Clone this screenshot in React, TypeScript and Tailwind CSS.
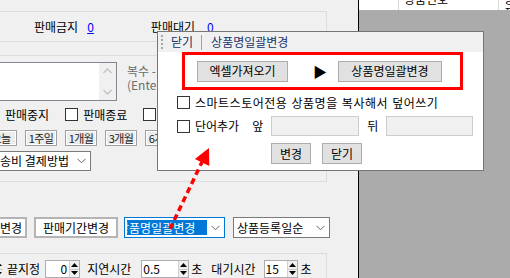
import React from 'react';

const Chk = () => <span className="block w-[13px] h-[13px] border border-[#333] bg-white shrink-0" />;

const Chevron = () => (
  <svg width="9" height="6" viewBox="0 0 9 6" className="shrink-0">
    <path d="M0.5 0.8 L4.5 4.8 L8.5 0.8" fill="none" stroke="#666" strokeWidth="1" />
  </svg>
);

const SpinArrows = () => (
  <div className="flex flex-col w-[10px] h-full bg-[#f0f0f0] border-l border-[#d0d0d0]">
    <div className="flex-1 flex items-center justify-center border-b border-[#c8c8c8]">
      <svg width="7" height="4" viewBox="0 0 7 4"><path d="M0 4 L3.5 0 L7 4 Z" fill="#000" /></svg>
    </div>
    <div className="flex-1 flex items-center justify-center">
      <svg width="7" height="4" viewBox="0 0 7 4"><path d="M0 0 L3.5 4 L7 0 Z" fill="#000" /></svg>
    </div>
  </div>
);

const SmallBtn = ({ label }: { label: string }) => (
  <span className="flex items-center justify-center h-[16px] w-[32px] border border-[#a0a0a0] bg-[#ececec] shadow-[inset_1px_1px_0_#fff,inset_-1px_-1px_0_#fff] text-[11px] tracking-[-0.6px] text-[#222] shrink-0">
    {label}
  </span>
);

export default function App() {
  return (
    <div className="relative w-[510px] h-[278px] flex overflow-hidden bg-[#f0f0f0] text-[12px] leading-none text-black font-['Noto_Sans_CJK_KR','Noto_Sans',sans-serif]">
      {/* left form */}
      <div className="w-[358px] shrink-0 flex flex-col overflow-hidden">
        <div className="mt-[11px] h-[33px] w-[327px] border-t border-r border-b border-[#dcdcdc] flex items-center">
          <span className="ml-[34px]">판매금지</span>
          <span className="ml-[9px] text-[#0000ff] underline">0</span>
          <span className="ml-[57px]">판매대기</span>
          <span className="ml-[12px] text-[#0000ff] underline">0</span>
        </div>

        <div className="mt-[13px] h-[127px] w-[327px] shrink-0 border-t border-r border-b border-[#dcdcdc] flex flex-col">
          <div className="mt-[6px] flex items-start">
            <div className="-ml-[10px] w-[127px] h-[39px] border border-[#828790] bg-white flex justify-end">
              <div className="w-[17px] h-full bg-[#f0f0f0] flex flex-col items-center justify-between py-[5px]">
                <svg width="9" height="6" viewBox="0 0 9 6"><path d="M0.5 5 L4.5 1 L8.5 5" fill="none" stroke="#c2c2c2" strokeWidth="1.3" /></svg>
                <svg width="9" height="6" viewBox="0 0 9 6"><path d="M0.5 1 L4.5 5 L8.5 1" fill="none" stroke="#c2c2c2" strokeWidth="1.3" /></svg>
              </div>
            </div>
            <div className="ml-[10px] mt-[2px] flex flex-col text-[#6d6d6d] leading-[14px]">
              <span>복수 -</span>
              <span>(Enter)</span>
            </div>
          </div>
          <div className="mt-[7px] -ml-[14px] flex items-center h-[13px]">
            <Chk />
            <span className="ml-[6px]">판매중지</span>
            <span className="ml-[16px]"><Chk /></span>
            <span className="ml-[5px]">판매종료</span>
            <span className="ml-[16px]"><Chk /></span>
          </div>
          <div className="mt-[9px] -ml-[15px] flex items-center gap-[8px]">
            <SmallBtn label="오늘" />
            <SmallBtn label="1주일" />
            <SmallBtn label="1개월" />
            <SmallBtn label="3개월" />
            <SmallBtn label="6개월" />
          </div>
          <div className="mt-[5px] -ml-[20px] w-[111px] h-[20px] border border-[#7a7a7a] bg-white flex items-center">
            <span className="ml-[8px] whitespace-nowrap">배송비 결제방법</span>
            <span className="ml-auto w-[17px] h-full flex items-center justify-center">
              <Chevron />
            </span>
          </div>
        </div>

        <div className="mt-[35px] flex items-center h-[21px]">
          <span className="-ml-[50px] w-[77px] h-[21px] border-2 border-[#b4b4b4] bg-white flex items-center justify-end pr-[3px] shrink-0">판매가변경</span>
          <span className="ml-[7px] w-[84px] h-[21px] border-2 border-[#b4b4b4] bg-white flex items-center justify-center shrink-0">판매기간변경</span>
          <span className="ml-[6px] w-[101px] h-[21px] border border-[#0078d7] bg-white flex items-center shrink-0">
            <span className="ml-[2px] w-[80px] h-[15px] bg-[#0078d7] text-white overflow-hidden flex items-center">
              <span className="-ml-[9px] whitespace-nowrap">상품명일괄변경</span>
            </span>
            <span className="ml-auto mr-[4px]"><Chevron /></span>
          </span>
          <span className="ml-[8px] w-[97px] h-[21px] border border-[#7a7a7a] bg-white flex items-center shrink-0">
            <span className="ml-[3px]">상품등록일순</span>
            <span className="ml-auto mr-[4px]"><Chevron /></span>
          </span>
        </div>

        <div className="mt-[15px] w-[327px] flex-1 border-t border-r border-[#dcdcdc] flex items-start">
          <div className="mt-[6px] flex items-center h-[18px]">
            <div className="-ml-[7px] w-[10px] h-full"><SpinArrows /></div>
            <span className="ml-[4px]">끝지정</span>
            <div className="ml-[5px] w-[35px] h-full border border-[#abadb3] bg-white flex">
              <span className="flex-1 text-right pr-[2px] self-center">0</span>
              <SpinArrows />
            </div>
            <span className="ml-[7px]">지연시간</span>
            <div className="ml-[10px] w-[48px] h-full border border-[#abadb3] bg-white flex">
              <span className="flex-1 pl-[1px] self-center">0.5</span>
              <SpinArrows />
            </div>
            <span className="ml-[2px]">초</span>
            <span className="ml-[9px]">대기시간</span>
            <div className="ml-[8px] w-[34px] h-full border border-[#abadb3] bg-white flex">
              <span className="flex-1 pl-[1px] self-center">15</span>
              <SpinArrows />
            </div>
            <span className="ml-[3px]">초</span>
          </div>
        </div>
      </div>

      {/* right grid */}
      <div className="flex-1 border-l border-black bg-[#ababab] flex flex-col">
        <div className="h-[10px] bg-white flex overflow-hidden">
          <div className="w-[40px] border-r border-[#d8d8d8]" />
          <div className="w-[100px] border-r border-[#d8d8d8] overflow-hidden">
            <span className="block -mt-[8px] ml-[5px] leading-[14px]">상품번호</span>
          </div>
          <div className="flex-1 overflow-hidden">
            <span className="block -mt-[8px] ml-[5px] leading-[14px]">상품명</span>
          </div>
        </div>
      </div>

      {/* popup */}
      <div className="absolute left-[157px] top-[31px] w-[327px] h-[140px] border border-[#767676] bg-white flex flex-col">
        <div className="h-[20px] bg-[#f0f0f0] flex items-center text-[#16306a]">
          <div className="ml-[3px] flex flex-col gap-[2px]">
            <span className="block w-[2px] h-[2px] bg-[#a8a8a8]" />
            <span className="block w-[2px] h-[2px] bg-[#a8a8a8]" />
            <span className="block w-[2px] h-[2px] bg-[#a8a8a8]" />
            <span className="block w-[2px] h-[2px] bg-[#a8a8a8]" />
          </div>
          <span className="ml-[8px]">닫기</span>
          <span className="ml-[8px] w-px h-[15px] bg-[#a0a0a0]" />
          <span className="ml-[9px]">상품명일괄변경</span>
        </div>
        <div className="ml-[24px] w-[281px] h-[38px] border-[3px] border-[#ff0000] flex items-center">
          <span className="ml-[12px] w-[91px] h-[21px] border border-[#adadad] bg-[#e1e1e1] flex items-center justify-center">엑셀가져오기</span>
          <span className="ml-[25px] text-[14px]">▶</span>
          <span className="ml-[11px] w-[104px] h-[21px] border border-[#adadad] bg-[#e1e1e1] flex items-center justify-center">상품명일괄변경</span>
        </div>
        <div className="mt-[6px] ml-[19px] flex items-center h-[13px]">
          <Chk />
          <span className="ml-[5px] whitespace-nowrap [word-spacing:1px] tracking-[0.5px]">스마트스토어전용 상품명을 복사해서 덮어쓰기</span>
        </div>
        <div className="mt-[7px] ml-[19px] flex items-center h-[20px]">
          <Chk />
          <span className="ml-[5px]">단어추가</span>
          <span className="ml-[13px]">앞</span>
          <span className="ml-[8px] w-[88px] h-[20px] border border-[#cccccc] bg-[#f0f0f0]" />
          <span className="ml-[8px]">뒤</span>
          <span className="ml-[8px] w-[87px] h-[20px] border border-[#cccccc] bg-[#f0f0f0]" />
        </div>
        <div className="mt-[7px] ml-[113px] flex items-center gap-[11px]">
          <span className="w-[40px] h-[21px] border border-[#adadad] bg-[#e1e1e1] flex items-center justify-center">변경</span>
          <span className="w-[40px] h-[21px] border border-[#adadad] bg-[#e1e1e1] flex items-center justify-center">닫기</span>
        </div>
      </div>

      {/* red dashed arrow */}
      <svg className="absolute left-0 top-0 pointer-events-none" width="510" height="278" viewBox="0 0 510 278">
        <line x1="170" y1="229" x2="202" y2="162" stroke="#ff0000" strokeWidth="3.5" strokeDasharray="6 4" />
        <path d="M209 148 L209.3 165.9 L194.9 158.9 Z" fill="#ff0000" />
      </svg>
    </div>
  );
}
